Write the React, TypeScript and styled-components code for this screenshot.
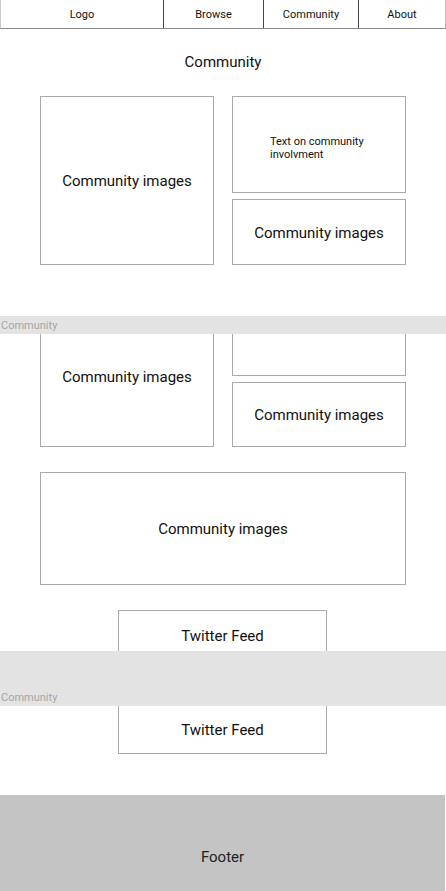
import styled, { createGlobalStyle } from 'styled-components'

const GlobalStyle = createGlobalStyle`
  body {
    margin: 0;
    background: #fff;
    font-family: Roboto, 'Liberation Sans', sans-serif;
    color: #111;
  }
`

const Page = styled.div`
  width: 446px;
  display: flex;
  flex-direction: column;
`

const Nav = styled.nav`
  display: grid;
  grid-template-columns: 162px 100px 95px 87px;
  height: 29px;
  box-sizing: border-box;
  border-bottom: 1px solid #888;
  border-left: 1px solid #ccc;
  border-right: 1px solid #bbb;
`

const NavItem = styled.div<{ $divider?: boolean }>`
  display: flex;
  align-items: center;
  justify-content: center;
  font-size: 11px;
  color: #111;
  border-left: ${({ $divider }) => ($divider ? '1.5px solid #444' : 'none')};
`

const Heading = styled.h1`
  margin: 24px 0 24px;
  font-size: 15px;
  line-height: 19px;
  font-weight: 400;
  text-align: center;
  color: #111;
`

const Grid = styled.div<{ $height: number }>`
  display: grid;
  grid-template-columns: 174px 174px;
  column-gap: 18px;
  padding-left: 40px;
  height: ${({ $height }) => $height}px;
`

const Column = styled.div`
  display: flex;
  flex-direction: column;
  gap: 6px;
`

const Box = styled.div<{ $cutTop?: boolean; $cutBottom?: boolean; $height?: number }>`
  box-sizing: border-box;
  border: 1px solid #aaa;
  border-top: ${({ $cutTop }) => ($cutTop ? 'none' : '1px solid #aaa')};
  border-bottom: ${({ $cutBottom }) => ($cutBottom ? 'none' : '1px solid #aaa')};
  display: flex;
  align-items: center;
  justify-content: center;
  padding-top: 2px;
  font-size: 15px;
  line-height: 19px;
  color: #111;
  ${({ $height }) => ($height ? `height: ${$height}px; flex: none;` : 'flex: 1;')}
`

const TopText = styled(Box)`
  align-items: flex-start;
  padding-top: 34px;
`

const InfoBox = styled(Box)`
  align-items: flex-start;
  justify-content: flex-start;
  padding: 38px 0 0 37px;
`

const InfoText = styled.p`
  margin: 0;
  max-width: 110px;
  font-size: 11px;
  line-height: 13px;
  color: #111;
`

const Band = styled.div<{ $height: number; $top: number }>`
  height: ${({ $height }) => $height}px;
  margin-top: ${({ $top }) => $top}px;
  background: #e3e3e3;
  display: flex;
  align-items: flex-end;
  padding: 0 0 1px 1px;
  box-sizing: border-box;
`

const BandLabel = styled.span`
  font-size: 11px;
  line-height: 14px;
  color: #a6a6a6;
`

const Wide = styled(Box)`
  margin: 25px 0 0 40px;
  width: 366px;
  height: 113px;
  flex: none;
`

const Twitter = styled(Box)<{ $pad: number; $mt?: number }>`
  margin: ${({ $mt }) => $mt ?? 0}px 0 0 118px;
  width: 209px;
  align-items: flex-start;
  padding-top: ${({ $pad }) => $pad}px;
`

const Footer = styled.footer`
  margin-top: 41px;
  width: 445px;
  height: 96px;
  background: #c4c4c4;
  display: flex;
  justify-content: center;
  padding-top: 53px;
  box-sizing: border-box;
  font-size: 15px;
  line-height: 19px;
  color: #222;
`

export default function App() {
  return (
    <>
      <GlobalStyle />
      <Page>
        <Nav>
          <NavItem>Logo</NavItem>
          <NavItem $divider>Browse</NavItem>
          <NavItem $divider>Community</NavItem>
          <NavItem $divider>About</NavItem>
        </Nav>

        <Heading>Community</Heading>

        <Grid $height={169}>
          <Box>Community images</Box>
          <Column>
            <InfoBox $height={97}>
              <InfoText>Text on community involvment</InfoText>
            </InfoBox>
            <Box>Community images</Box>
          </Column>
        </Grid>

        <Band $height={18} $top={51}>
          <BandLabel>Community</BandLabel>
        </Band>

        <Grid $height={113}>
          <TopText $cutTop>Community images</TopText>
          <Column>
            <Box $cutTop $height={42} />
            <Box>Community images</Box>
          </Column>
        </Grid>

        <Wide>Community images</Wide>

        <Twitter $cutBottom $height={41} $pad={16} $mt={25}>Twitter Feed</Twitter>

        <Band $height={55} $top={0}>
          <BandLabel>Community</BandLabel>
        </Band>

        <Twitter $cutTop $height={48} $pad={15}>Twitter Feed</Twitter>

        <Footer>Footer</Footer>
      </Page>
    </>
  )
}
